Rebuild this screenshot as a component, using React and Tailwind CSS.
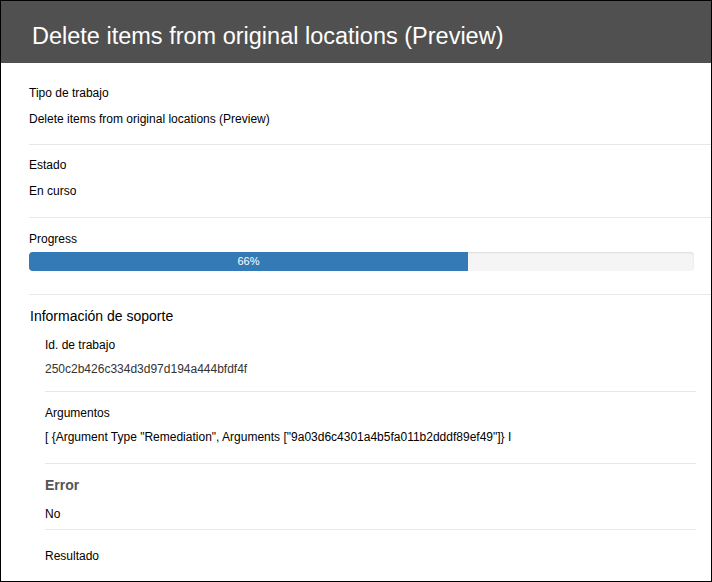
export default function App() {
  const font = { fontFamily: '"Liberation Sans", Arial, sans-serif' };
  return (
    <div className="w-[712px] h-[582px] border border-black bg-white overflow-hidden text-black" style={font}>
      {/* Title bar */}
      <div className="h-[62px] bg-[#505050] flex items-center pl-[31px] pt-[10px]">
        <h1 className="text-[23.5px] text-white font-normal leading-none">Delete items from original locations (Preview)</h1>
      </div>

      <div className="pl-[28px]">
        <div className="pt-[22px] pb-[17px] border-b border-[#e8e8e8]">
          <div className="text-[12px] leading-4">Tipo de trabajo</div>
          <div className="text-[12px] leading-4 mt-[10px]">Delete items from original locations (Preview)</div>
        </div>

        <div className="pt-[12px] pb-[18px] border-b border-[#e8e8e8]">
          <div className="text-[12px] leading-4">Estado</div>
          <div className="text-[12px] leading-4 mt-[10px]">En curso</div>
        </div>

        <div className="pt-[13px] pb-[23px] border-b border-[#e8e8e8] pr-[17px]">
          <div className="text-[12px] leading-4">Progress</div>
          <div className="mt-[5px] h-[19px] rounded bg-[#f5f5f5] shadow-[inset_0_1px_2px_rgba(0,0,0,0.1)] overflow-hidden flex">
            <div className="w-[66%] bg-[#337ab7] text-white text-[11px] flex items-center justify-center">66%</div>
          </div>
        </div>

        <div className="pt-[12px]">
          <div className="text-[14px] leading-[18px] pl-[1px]">Información de soporte</div>
          <div className="pl-[16px] pr-[15px]">
            <div className="pt-[12px] pb-[14px] border-b border-[#e8e8e8]">
              <div className="text-[12px] leading-4">Id. de trabajo</div>
              <div className="text-[12px] leading-4 mt-[8px] text-[#333]">250c2b426c334d3d97d194a444bfdf4f</div>
            </div>
            <div className="pt-[13px] pb-[18px] border-b border-[#e8e8e8]">
              <div className="text-[12px] leading-4">Argumentos</div>
              <div className="text-[12px] leading-4 mt-[8px]">[ {'{'}Argument Type "Remediation", Arguments ["9a03d6c4301a4b5fa011b2dddf89ef49"]{'}'} I</div>
            </div>
            <div className="pt-[12px] pb-[7px] border-b border-[#e8e8e8]">
              <div className="text-[14px] leading-[18px] font-bold text-[#555]">Error</div>
              <div className="text-[12px] leading-4 mt-[12px]">No</div>
            </div>
            <div className="pt-[18px]">
              <div className="text-[12px] leading-4">Resultado</div>
            </div>
          </div>
        </div>
      </div>
    </div>
  );
}
